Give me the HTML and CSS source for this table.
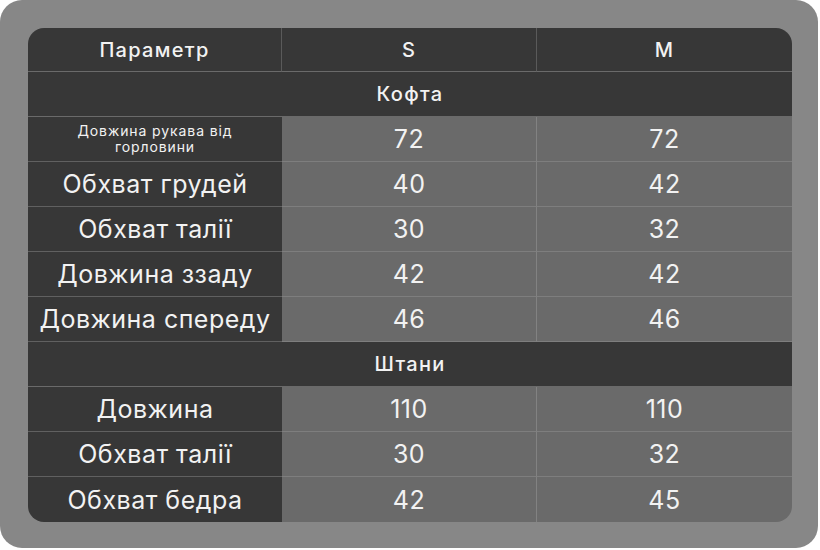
FILE: index.html
```html
<!DOCTYPE html>
<html lang="uk">
<head>
<meta charset="utf-8">
<title>Розміри</title>
<link rel="stylesheet" href="styles.css">
</head>
<body>
<div class="frame">
  <div class="table">
    <div class="cell head">Параметр</div>
    <div class="cell head">S</div>
    <div class="cell head last">M</div>

    <div class="cell group">Кофта</div>

    <div class="cell name small">Довжина рукава від<br>горловини</div>
    <div class="cell val">72</div>
    <div class="cell val last">72</div>

    <div class="cell name">Обхват грудей</div>
    <div class="cell val">40</div>
    <div class="cell val last">42</div>

    <div class="cell name">Обхват талії</div>
    <div class="cell val">30</div>
    <div class="cell val last">32</div>

    <div class="cell name">Довжина ззаду</div>
    <div class="cell val">42</div>
    <div class="cell val last">42</div>

    <div class="cell name">Довжина спереду</div>
    <div class="cell val">46</div>
    <div class="cell val last">46</div>

    <div class="cell group">Штани</div>

    <div class="cell name">Довжина</div>
    <div class="cell val">110</div>
    <div class="cell val last">110</div>

    <div class="cell name">Обхват талії</div>
    <div class="cell val">30</div>
    <div class="cell val last">32</div>

    <div class="cell name bottom">Обхват бедра</div>
    <div class="cell val bottom">42</div>
    <div class="cell val last bottom">45</div>
  </div>
</div>
</body>
</html>
```
FILE: styles.css
```css
html, body {
  margin: 0;
  padding: 0;
  background: #ffffff;
}
.frame {
  width: 818px;
  height: 548px;
  background: #878787;
  border-radius: 22px;
  padding: 28px;
  box-sizing: border-box;
}
.table {
  width: 764px;
  height: 494px;
  border-radius: 16px;
  overflow: hidden;
  display: grid;
  grid-template-columns: 254px 255px 255px;
  grid-template-rows: 44px repeat(10, 45px);
  font-family: Inter, "Noto Sans", sans-serif;
  color: #f2f2f2;
}
.cell {
  box-sizing: border-box;
  display: flex;
  align-items: center;
  justify-content: center;
  text-align: center;
  border-bottom: 1px solid #606060;
  border-right: 1px solid #5a5a5a;
  font-size: 25px;
  letter-spacing: 0.5px;
}
.cell.last {
  border-right: none;
}
.cell.bottom {
  border-bottom: none;
}
.head {
  background: #373737;
  font-size: 20px;
  font-weight: 500;
  letter-spacing: 1.3px;
  border-bottom-color: #6a6a6a;
}
.group {
  grid-column: 1 / 4;
  background: #373737;
  font-size: 20px;
  font-weight: 500;
  letter-spacing: 1.3px;
  border-right: none;
  border-bottom-color: #6a6a6a;
}
.name {
  background: #373737;
  border-right: none;
}
.small {
  font-size: 14px;
  line-height: 16px;
  letter-spacing: 0.9px;
}
.val {
  background: #6a6a6a;
  border-bottom-color: #7e7e7e;
  border-right-color: #828282;
}
```
